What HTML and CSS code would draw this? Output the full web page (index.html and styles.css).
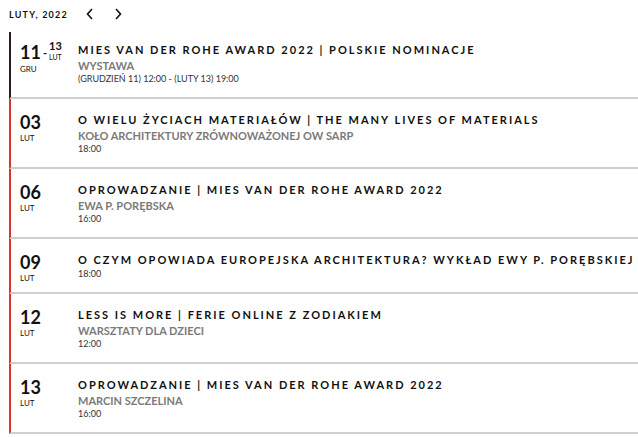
FILE: index.html
```html
<!DOCTYPE html>
<html lang="pl">
<head>
<meta charset="utf-8">
<link rel="stylesheet" href="styles.css">
</head>
<body>
<div class="header">
  <span class="month">LUTY, 2022</span>
  <span class="nav">
    <svg width="8" height="12" viewBox="0 0 8 12"><path d="M6 1 L1.5 6 L6 11" fill="none" stroke="#111" stroke-width="1.6"/></svg>
  </span>
  <span class="nav">
    <svg width="8" height="12" viewBox="0 0 8 12"><path d="M2 1 L6.5 6 L2 11" fill="none" stroke="#111" stroke-width="1.6"/></svg>
  </span>
</div>
<div class="list">
  <div class="item current">
    <div class="date">
      <div class="range"><span class="day">11</span><span class="dash">-</span><span class="end"><span class="eday">13</span><span class="emon">LUT</span></span></div>
      <div class="mon mon-first">GRU</div>
    </div>
    <div class="info">
      <div class="title">MIES VAN DER ROHE AWARD 2022 | POLSKIE NOMINACJE</div>
      <div class="sub">WYSTAWA</div>
      <div class="time">(GRUDZIEŃ 11) 12:00 - (LUTY 13) 19:00</div>
    </div>
  </div>
  <div class="item">
    <div class="date"><div class="day">03</div><div class="mon">LUT</div></div>
    <div class="info">
      <div class="title">O WIELU ŻYCIACH MATERIAŁÓW | THE MANY LIVES OF MATERIALS</div>
      <div class="sub">KOŁO ARCHITEKTURY ZRÓWNOWAŻONEJ OW SARP</div>
      <div class="time">18:00</div>
    </div>
  </div>
  <div class="item">
    <div class="date"><div class="day">06</div><div class="mon">LUT</div></div>
    <div class="info">
      <div class="title">OPROWADZANIE | MIES VAN DER ROHE AWARD 2022</div>
      <div class="sub">EWA P. PORĘBSKA</div>
      <div class="time">16:00</div>
    </div>
  </div>
  <div class="item short">
    <div class="date"><div class="day">09</div><div class="mon">LUT</div></div>
    <div class="info">
      <div class="title">O CZYM OPOWIADA EUROPEJSKA ARCHITEKTURA? WYKŁAD EWY P. PORĘBSKIEJ</div>
      <div class="time">18:00</div>
    </div>
  </div>
  <div class="item">
    <div class="date"><div class="day">12</div><div class="mon">LUT</div></div>
    <div class="info">
      <div class="title">LESS IS MORE | FERIE ONLINE Z ZODIAKIEM</div>
      <div class="sub">WARSZTATY DLA DZIECI</div>
      <div class="time">12:00</div>
    </div>
  </div>
  <div class="item">
    <div class="date"><div class="day">13</div><div class="mon">LUT</div></div>
    <div class="info">
      <div class="title">OPROWADZANIE | MIES VAN DER ROHE AWARD 2022</div>
      <div class="sub">MARCIN SZCZELINA</div>
      <div class="time">16:00</div>
    </div>
  </div>
</div>
</body>
</html>
```
FILE: styles.css
```css
* { box-sizing: border-box; }
body {
  margin: 0;
  background: #fff;
  color: #111;
  font-family: "Lato", "Noto Sans", sans-serif;
}
.header {
  display: flex;
  align-items: center;
  height: 32px;
  padding: 0 0 4px 9px;
}
.month {
  font-size: 9px;
  font-weight: 700;
  letter-spacing: 1.2px;
  margin-right: 18px;
}
.nav {
  display: flex;
  width: 28px;
  justify-content: flex-start;
}
.list {
  margin-left: 9px;
}
.item {
  display: flex;
  border-left: 2px solid #d8342c;
  border-bottom: 2px solid #cfcfcf;
  padding: 14px 0 0 9px;
  min-height: 70px;
}
.item.current {
  border-left-color: #2e1c1c;
  min-height: 67px;
  padding-top: 11px;
}
.item.short { min-height: 55px; }
.date {
  width: 58px;
  flex: none;
}
.day {
  font-size: 18px;
  font-weight: 700;
  line-height: 18px;
}
.mon {
  font-size: 8px;
  line-height: 9px;
  margin-top: 3px;
}
.mon-first { margin-top: 4px; }
.range { display: flex; align-items: flex-start; }
.dash { font-size: 11px; font-weight: 700; line-height: 11px; margin: 4px 2px 0 2px; }
.end { display: flex; flex-direction: column; margin-top: -3px; }
.eday { font-size: 11px; font-weight: 700; line-height: 11px; }
.emon { font-size: 7px; line-height: 8px; margin-top: 2px; }
.info { flex: 1; min-width: 0; }
.title {
  font-size: 11px;
  font-weight: 700;
  letter-spacing: 2px;
  line-height: 14px;
  white-space: nowrap;
}
.sub {
  font-size: 11px;
  font-weight: 700;
  color: #7a7a7a;
  line-height: 13px;
  margin-top: 2px;
}
.time {
  font-size: 9px;
  color: #333;
  line-height: 12px;
  margin-top: 1px;
}
```
